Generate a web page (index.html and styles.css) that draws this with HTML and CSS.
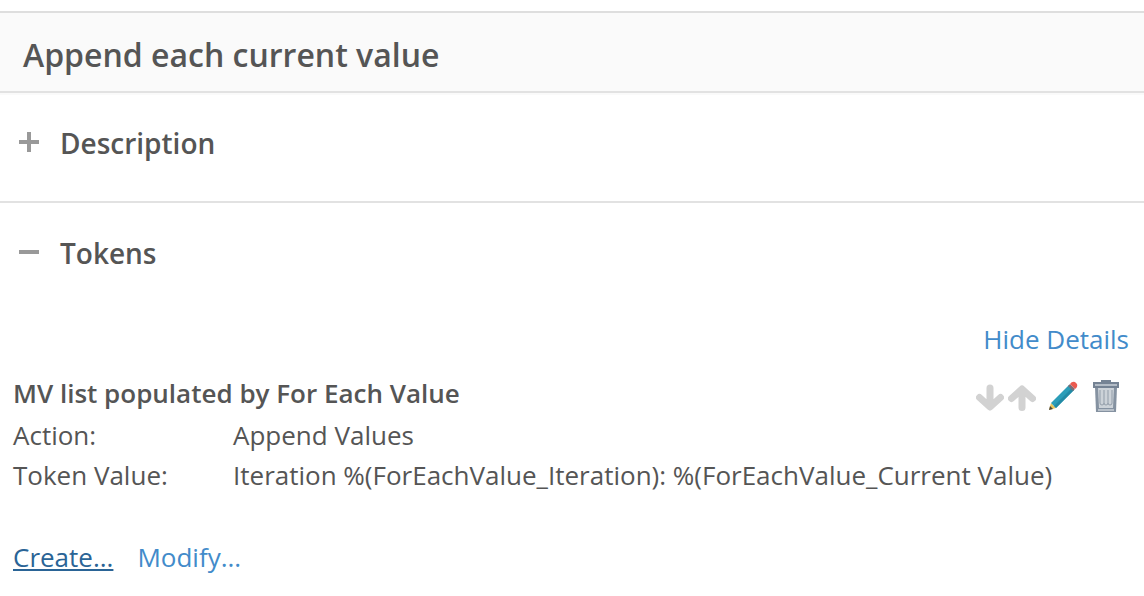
FILE: index.html
```html
<!DOCTYPE html>
<html lang="en">
<head>
    <meta charset="UTF-8">
    <meta name="viewport" content="width=device-width, initial-scale=1.0">
    <title>Append each current value</title>
    <link rel="stylesheet" href="styles.css">
</head>
<body>
    <header class="page-header">
        <h1>Append each current value</h1>
    </header>

    <section class="panel">
        <h2>
            <button class="toggle" type="button" aria-expanded="false">
                <svg class="toggle-icon" viewBox="0 0 22 22" aria-hidden="true">
                    <path d="M1 10h20M11 0v20"/>
                </svg>
                Description
            </button>
        </h2>
    </section>

    <section class="panel">
        <h2>
            <button class="toggle" type="button" aria-expanded="true">
                <svg class="toggle-icon" viewBox="0 0 22 22" aria-hidden="true">
                    <path d="M1 10h20"/>
                </svg>
                Tokens
            </button>
        </h2>

        <div class="panel-body">
            <div class="details-link"><a href="#">Hide Details</a></div>

            <div class="token-header">
                <h3>MV list populated by For Each Value</h3>
                <div class="token-actions">
                    <button type="button" aria-label="Move down">
                        <svg class="arrow" viewBox="0 0 28 28" aria-hidden="true">
                            <path d="M14 5v18M3.5 14.5L14 24l10.500-9.500"/>
                        </svg>
                    </button>
                    <button type="button" aria-label="Move up">
                        <svg class="arrow" viewBox="0 0 28 28" aria-hidden="true">
                            <path d="M14 24.500V7M3.500 15.500L14 6l10.500 9.500"/>
                        </svg>
                    </button>
                    <button class="edit" type="button" aria-label="Edit">
                        <svg viewBox="0 0 30 30" aria-hidden="true">
                            <path fill="#e9c45c" d="M1 29l2-7 5 5z"/>
                            <path fill="#4b4538" d="M1 29l1-4 3 3z"/>
                            <path fill="#2b9db8" d="M3 22L21 4l5 5L8 27z"/>
                            <path fill="#238aa5" d="M6 25L25 6l1 3L8 27z"/>
                            <path fill="#796f79" d="M20 5l2-2 5 5-2 2z"/>
                            <path fill="#eb5b50" d="M22 3q2-3 5-2l2 2q1 3-2 5z"/>
                        </svg>
                    </button>
                    <button class="delete" type="button" aria-label="Delete">
                        <svg viewBox="0 0 28 34" aria-hidden="true">
                            <path fill="#758394" d="M9 1h10v3H9z"/>
                            <path fill="#8592a1" d="M3 8h22l-1 25H4z"/>
                            <path fill="#ccd2d8" d="M6 9h16l-1 20H7z"/>
                            <path fill="#b9c1ca" d="M6 30h16v2H6z"/>
                            <path fill="#758394" d="M1 3h26v6H1z"/>
                            <path fill="#b3bcc6" d="M3 5h22v2H3z"/>
                            <path fill="none" stroke="#929da9" d="M8 11v13M12 11v13M16 11v13M20 11v13M8 24q0 2 2 2t2-2q0 2 2 2t2-2q0 2 2 2t2-2"/>
                        </svg>
                    </button>
                </div>
            </div>

            <dl class="token-details">
                <dt>Action:</dt>
                <dd>Append Values</dd>
                <dt>Token Value:</dt>
                <dd>Iteration %(ForEachValue_Iteration): %(ForEachValue_Current Value)</dd>
            </dl>

            <div class="links">
                <a class="active" href="#">Create...</a>
                <a href="#">Modify...</a>
            </div>
        </div>
    </section>
</body>
</html>
```
FILE: styles.css
```css
* {
    box-sizing: border-box;
}
body {
    margin: 0;
    padding-top: 11px;
    background: #fff;
    color: #555;
    font-family: "Open Sans", sans-serif;
    font-size: 26px;
    line-height: 40px;
}
h1, h2, h3, dl, dd {
    margin: 0;
}
h1, h2, h3 {
    font-weight: 600;
}
.page-header {
    padding: 22px 23px 16px;
    background: #fafafa;
    border-top: 2px solid #dedede;
    border-bottom: 2px solid #e2e2e2;
    box-shadow: 0 2px 0 #fafafa;
}
h1 {
    font-size: 32px;
}
h2 {
    font-size: 28px;
}
h3 {
    font-size: 26px;
}
button {
    padding: 0;
    border: none;
    background: none;
    color: inherit;
    font: inherit;
    cursor: pointer;
}
svg {
    display: block;
}
.panel {
    padding-top: 30px;
}
.panel + .panel {
    margin-top: 38px;
    border-top: 2px solid #e2e2e2;
}
.toggle {
    display: flex;
    align-items: center;
    gap: 20px;
    padding-left: 18px;
}
.toggle-icon {
    width: 22px;
    height: 22px;
    fill: none;
    stroke: #999;
    stroke-width: 4;
}
.panel-body {
    padding: 46px 15px 19px 13px;
}
a {
    color: #428bca;
    text-decoration: none;
}
a:hover,
a.active {
    color: #2a6496;
    text-decoration: underline;
}
.details-link {
    text-align: right;
}
.token-header {
    display: flex;
    justify-content: space-between;
    align-items: center;
    margin-top: 14px;
}
.token-actions {
    display: flex;
    align-items: center;
    gap: 4px;
    padding: 6px 9px 0 0;
}
.arrow {
    width: 28px;
    height: 28px;
    margin-top: 2px;
    fill: none;
    stroke: #d2d2d2;
    stroke-width: 7;
    stroke-linecap: round;
    stroke-linejoin: round;
}
.edit {
    margin-left: 8px;
}
.edit svg {
    width: 30px;
    height: 30px;
}
.delete {
    margin-left: 10px;
}
.delete svg {
    width: 28px;
    height: 34px;
}
.token-details {
    display: grid;
    grid-template-columns: 220px 1fr;
    margin-top: 2px;
}
.links {
    display: flex;
    gap: 24px;
    margin-top: 42px;
}
```
